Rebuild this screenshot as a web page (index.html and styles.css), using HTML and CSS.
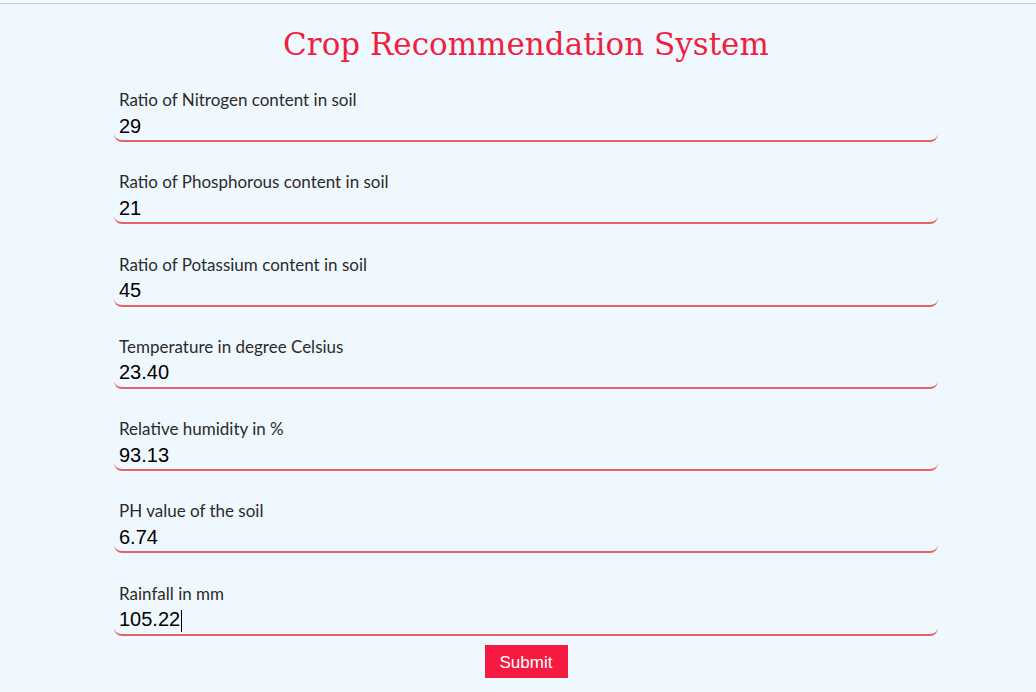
FILE: index.html
```html
<!DOCTYPE html>
<html lang="en">
<head>
<meta charset="utf-8">
<title>Crop Recommendation System</title>
<link rel="stylesheet" href="styles.css">
</head>
<body>
<div class="topbar"></div>
<main class="page">
  <h1 class="title">Crop Recommendation System</h1>
  <form class="form">
    <div class="field">
      <label class="label" for="n">Ratio of Nitrogen content in soil</label>
      <input class="input" id="n" type="text" value="29">
    </div>
    <div class="field">
      <label class="label" for="p">Ratio of Phosphorous content in soil</label>
      <input class="input" id="p" type="text" value="21">
    </div>
    <div class="field">
      <label class="label" for="k">Ratio of Potassium content in soil</label>
      <input class="input" id="k" type="text" value="45">
    </div>
    <div class="field">
      <label class="label" for="t">Temperature in degree Celsius</label>
      <input class="input" id="t" type="text" value="23.40">
    </div>
    <div class="field">
      <label class="label" for="h">Relative humidity in %</label>
      <input class="input" id="h" type="text" value="93.13">
    </div>
    <div class="field">
      <label class="label" for="ph">PH value of the soil</label>
      <input class="input" id="ph" type="text" value="6.74">
    </div>
    <div class="field field-last">
      <label class="label" for="r">Rainfall in mm</label>
      <div class="input-wrap">
        <input class="input" id="r" type="text" value="105.22">
        <span class="caret"></span>
      </div>
    </div>
    <div class="actions">
      <button class="submit" type="button">Submit</button>
    </div>
  </form>
</main>
</body>
</html>
```

FILE: styles.css
```css
html, body {
  margin: 0;
  padding: 0;
}
body {
  background: #f0f8ff;
  font-family: "Liberation Sans", Arial, sans-serif;
  height: 692px;
  overflow: hidden;
}
.topbar {
  height: 3px;
  background: #f5f9fc;
  border-bottom: 1px solid #c9c9c9;
}
.page {
  padding-left: 16px;
  display: flex;
  flex-direction: column;
  align-items: center;
}
.title {
  margin: 0;
  height: 84px;
  box-sizing: border-box;
  padding-top: 20px;
  font-family: "DejaVu Serif", "Liberation Serif", serif;
  font-weight: normal;
  font-size: 31px;
  line-height: 40px;
  color: #f01f40;
}
.form {
  width: 824px;
  display: flex;
  flex-direction: column;
}
.field {
  display: flex;
  flex-direction: column;
  margin-bottom: 28.3px;
}
.field-last {
  margin-bottom: 9px;
}
.label {
  display: block;
  padding-left: 5px;
  font-family: "Lato", "Open Sans", sans-serif;
  font-size: 17px;
  line-height: 24px;
  color: #2b2b2b;
}
.input-wrap {
  position: relative;
}
.input {
  box-sizing: border-box;
  display: block;
  width: 100%;
  height: 30px;
  margin: 0;
  padding: 0 5px;
  border: none;
  border-bottom: 2px solid #e46464;
  border-radius: 8px;
  background: transparent;
  font-family: "Liberation Sans", Arial, sans-serif;
  font-size: 20px;
  color: #000;
  outline: none;
}
.caret {
  position: absolute;
  left: 67px;
  top: 4px;
  width: 1px;
  height: 22px;
  background: #000;
}
.actions {
  display: flex;
  justify-content: center;
}
.submit {
  width: 83px;
  height: 33px;
  border: none;
  background: #f41a42;
  color: #fff;
  font-family: "Liberation Sans", Arial, sans-serif;
  font-size: 17px;
  line-height: 35px;
  padding: 0;
  cursor: pointer;
}
```
